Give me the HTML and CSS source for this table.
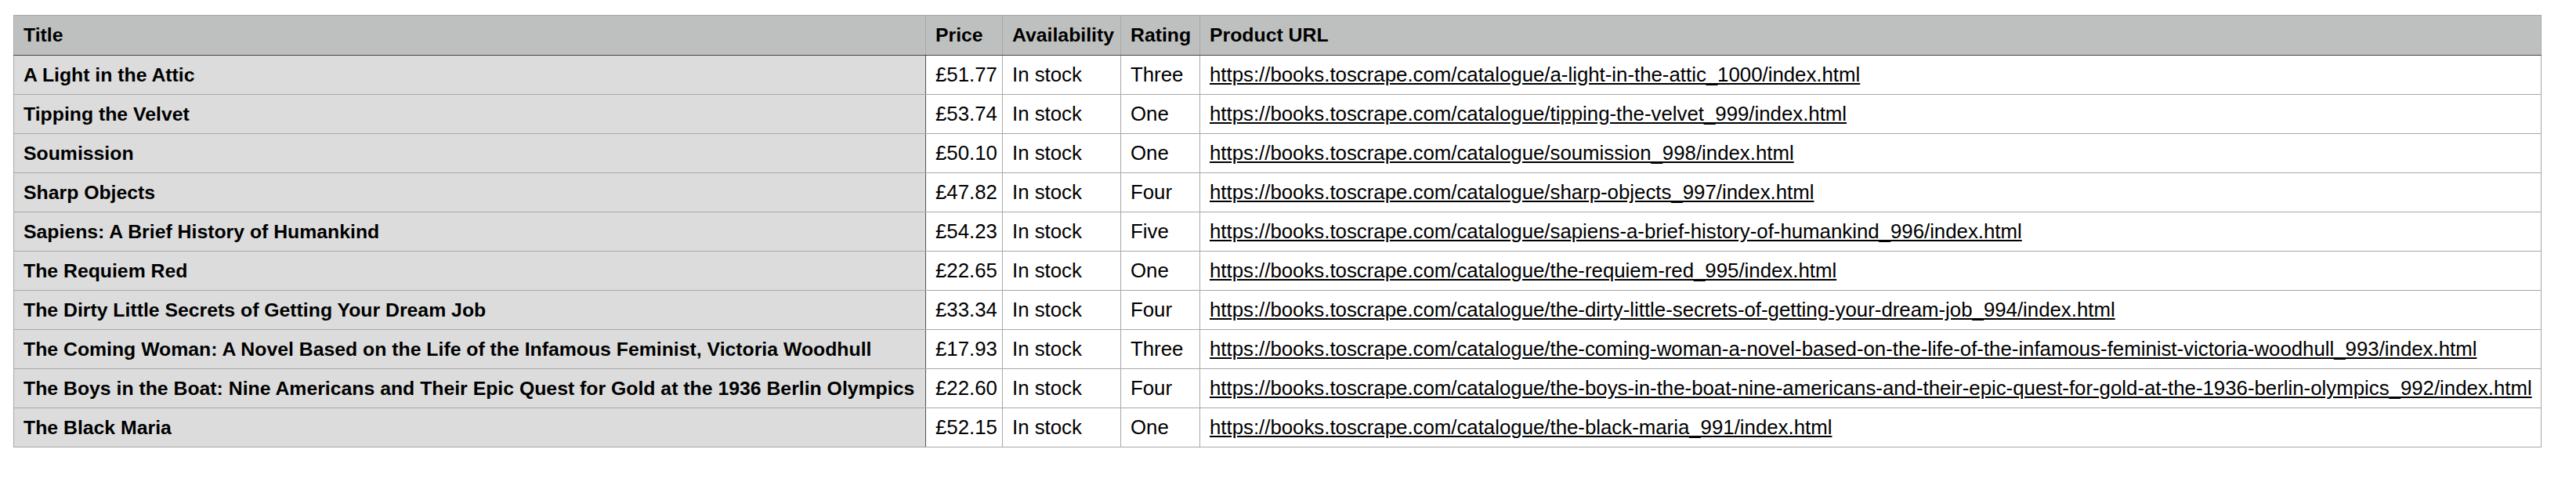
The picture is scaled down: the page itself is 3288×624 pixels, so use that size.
FILE: index.html
```html
<!DOCTYPE html>
<html>
<head>
<meta charset="utf-8">
<link rel="stylesheet" href="styles.css">
</head>
<body>
<table class="books">
  <colgroup>
    <col class="c-title"><col class="c-price"><col class="c-avail"><col class="c-rating"><col class="c-url">
  </colgroup>
  <thead>
    <tr><th>Title</th><th>Price</th><th>Availability</th><th>Rating</th><th>Product URL</th></tr>
  </thead>
  <tbody>
    <tr><td class="title">A Light in the Attic</td><td>£51.77</td><td>In stock</td><td>Three</td><td><a href="#">https://books.toscrape.com/catalogue/a-light-in-the-attic_1000/index.html</a></td></tr>
    <tr><td class="title">Tipping the Velvet</td><td>£53.74</td><td>In stock</td><td>One</td><td><a href="#">https://books.toscrape.com/catalogue/tipping-the-velvet_999/index.html</a></td></tr>
    <tr><td class="title">Soumission</td><td>£50.10</td><td>In stock</td><td>One</td><td><a href="#">https://books.toscrape.com/catalogue/soumission_998/index.html</a></td></tr>
    <tr><td class="title">Sharp Objects</td><td>£47.82</td><td>In stock</td><td>Four</td><td><a href="#">https://books.toscrape.com/catalogue/sharp-objects_997/index.html</a></td></tr>
    <tr><td class="title">Sapiens: A Brief History of Humankind</td><td>£54.23</td><td>In stock</td><td>Five</td><td><a href="#">https://books.toscrape.com/catalogue/sapiens-a-brief-history-of-humankind_996/index.html</a></td></tr>
    <tr><td class="title">The Requiem Red</td><td>£22.65</td><td>In stock</td><td>One</td><td><a href="#">https://books.toscrape.com/catalogue/the-requiem-red_995/index.html</a></td></tr>
    <tr><td class="title">The Dirty Little Secrets of Getting Your Dream Job</td><td>£33.34</td><td>In stock</td><td>Four</td><td><a href="#">https://books.toscrape.com/catalogue/the-dirty-little-secrets-of-getting-your-dream-job_994/index.html</a></td></tr>
    <tr><td class="title">The Coming Woman: A Novel Based on the Life of the Infamous Feminist, Victoria Woodhull</td><td>£17.93</td><td>In stock</td><td>Three</td><td><a href="#">https://books.toscrape.com/catalogue/the-coming-woman-a-novel-based-on-the-life-of-the-infamous-feminist-victoria-woodhull_993/index.html</a></td></tr>
    <tr><td class="title">The Boys in the Boat: Nine Americans and Their Epic Quest for Gold at the 1936 Berlin Olympics</td><td>£22.60</td><td>In stock</td><td>Four</td><td><a href="#">https://books.toscrape.com/catalogue/the-boys-in-the-boat-nine-americans-and-their-epic-quest-for-gold-at-the-1936-berlin-olympics_992/index.html</a></td></tr>
    <tr><td class="title">The Black Maria</td><td>£52.15</td><td>In stock</td><td>One</td><td><a href="#">https://books.toscrape.com/catalogue/the-black-maria_991/index.html</a></td></tr>
  </tbody>
</table>
</body>
</html>
```
FILE: styles.css
```css
html, body {
  margin: 0;
  background: #ffffff;
}
body {
  padding: 19px 0 0 17px;
  font-family: "Liberation Sans", Arial, sans-serif;
  font-size: 25.8px;
  color: #000;
}
.books {
  border-collapse: collapse;
  table-layout: fixed;
  width: 3226px;
}
.c-title { width: 1164px; }
.c-price { width: 98px; }
.c-avail { width: 151px; }
.c-rating { width: 101px; }
.c-url { width: 1712px; }
.books th, .books td {
  border: 1px solid #a8a8a8;
  padding: 0 6px 0 12px;
  text-align: left;
  white-space: nowrap;
  vertical-align: middle;
  overflow: hidden;
}
.books th {
  background: #bec0bf;
  font-weight: bold;
  font-size: 24.8px;
  height: 50px;
  border-bottom: 1px solid #444444;
}
.books td {
  height: 49px;
  background: #ffffff;
}
.books td.title {
  background: #dcdcdc;
  font-weight: bold;
  font-size: 24.8px;
  border-right: 1px solid #555555;
}
.books a {
  color: #000;
  text-decoration: underline;
}
```
